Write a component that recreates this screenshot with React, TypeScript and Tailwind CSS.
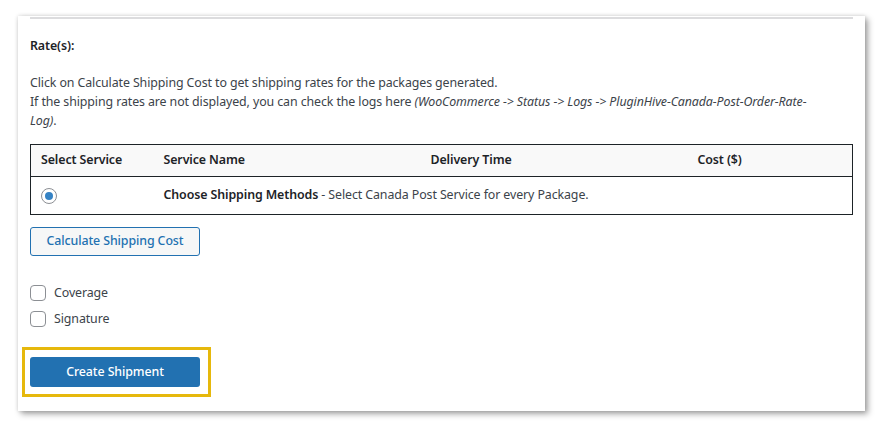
const font = { fontFamily: '"Noto Sans", "Open Sans", sans-serif' };

const Checkbox = ({ label }: { label: string }) => (
  <label className="flex items-center gap-2 h-[18px]">
    <span className="w-4 h-4 rounded-[4px] border border-[#8c8f94] bg-white" />
    <span>{label}</span>
  </label>
);

export default function App() {
  return (
    <div className="min-h-screen w-full bg-white pt-4 pl-[18px]" style={font}>
      <div className="w-[847px] h-[395px] bg-white shadow-[3px_3px_6px_rgba(0,0,0,0.35),0_0_4px_rgba(0,0,0,0.15)] px-3 text-[12.4px] tracking-[-0.1px] text-[#3c434a]">
        <div className="h-[3px] border-b-2 border-[#dcdcde]" />
        <div className="mt-[17px] font-semibold text-[#1d2327] leading-[19px]">Rate(s):</div>
        <div className="mt-[18px] leading-[19px]">
          Click on Calculate Shipping Cost to get shipping rates for the packages generated.
          <br />
          If the shipping rates are not displayed, you can check the logs here{" "}
          <em>
            (WooCommerce -&gt; Status -&gt; Logs -&gt; PluginHive-Canada-Post-Order-Rate-
            <br />
            Log)
          </em>
          .
        </div>
        <table className="mt-[14px] w-full border border-[#1d2327] border-collapse">
          <thead>
            <tr className="bg-[#f9f9f9] h-8 border-b border-[#1d2327] text-left text-[#1d2327]">
              <th className="pl-[10px] w-[133px] font-semibold">Select Service</th>
              <th className="w-[267px] font-semibold">Service Name</th>
              <th className="w-[267px] font-semibold">Delivery Time</th>
              <th className="font-semibold">Cost ($)</th>
            </tr>
          </thead>
          <tbody>
            <tr className="h-[38px]">
              <td className="pl-[10px]">
                <span className="flex items-center justify-center w-4 h-4 rounded-full border border-[#8c8f94] bg-white">
                  <span className="w-2 h-2 rounded-full bg-[#3582c4]" />
                </span>
              </td>
              <td colSpan={3}>
                <span className="font-semibold text-[#1d2327]">Choose Shipping Methods</span> - Select Canada
                Post Service for every Package.
              </td>
            </tr>
          </tbody>
        </table>
        <button className="mt-3 w-[170px] h-[29px] rounded-[3px] border border-[#2271b1] bg-[#f6f7f7] text-[#2271b1] font-medium">
          Calculate Shipping Cost
        </button>
        <div className="mt-[28px] flex flex-col gap-2">
          <Checkbox label="Coverage" />
          <Checkbox label="Signature" />
        </div>
        <div className="mt-[19px] -ml-2 w-[189px] h-[50px] border-[3px] border-[#e6b80c] pt-[7px] pl-[5px]">
          <button className="w-[170px] h-[30px] rounded-[3px] bg-[#2271b1] text-white font-medium">
            Create Shipment
          </button>
        </div>
      </div>
    </div>
  );
}
